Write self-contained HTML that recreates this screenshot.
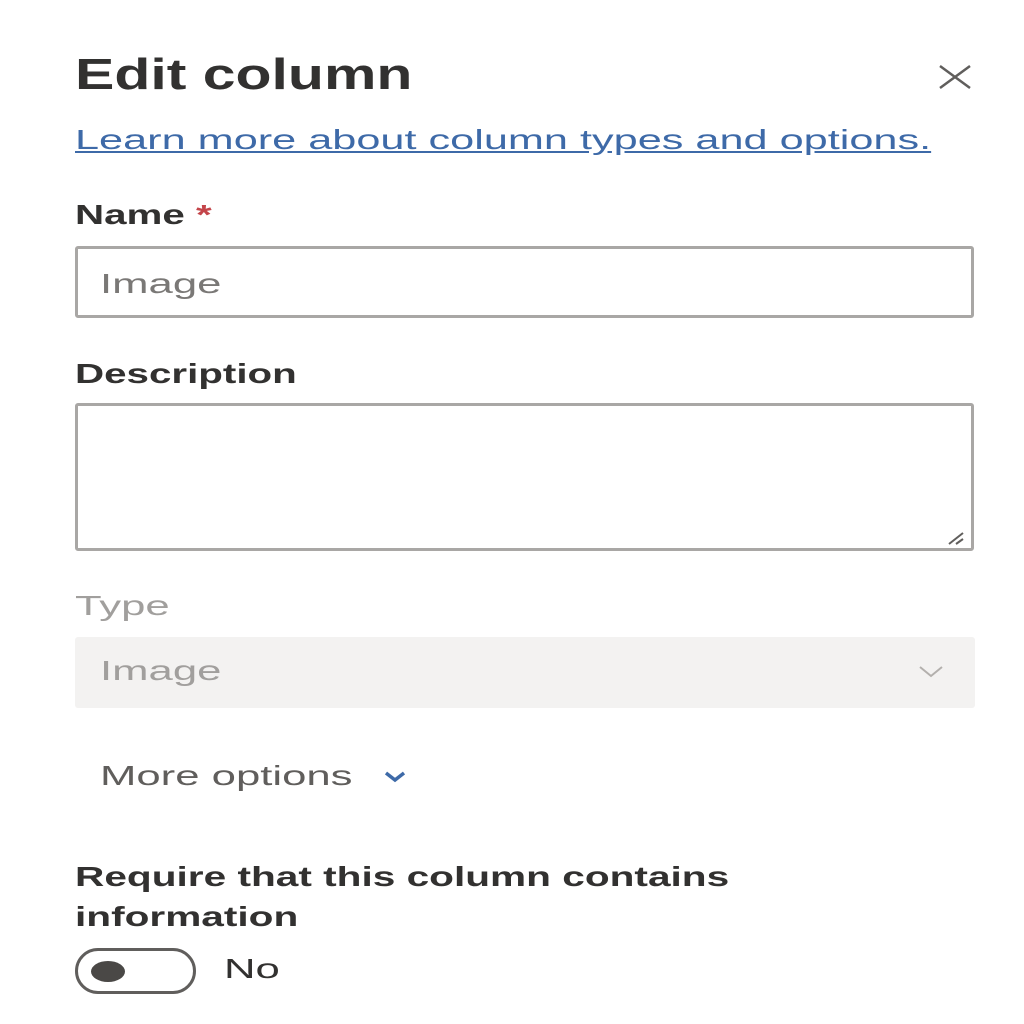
<!DOCTYPE html>
<html><head><style>
body{margin:0;width:1024px;height:1024px;background:#fff;position:relative;overflow:hidden;font-family:"Liberation Sans",sans-serif;}
.t{position:absolute;white-space:nowrap;transform-origin:0 0;transform:scaleX(1.56);}
.b{transform:scaleX(1.44);}
.box{position:absolute;box-sizing:border-box;}
</style></head><body>
<div class="t" style="left:75px;top:50px;font-size:44px;color:#323130;font-weight:bold;transform:scaleX(1.34);">Edit column</div>
<svg style="position:absolute;left:938px;top:64px" width="34" height="26"><path d="M2 2L32 24M32 2L2 24" stroke="#605e5c" stroke-width="2.5" fill="none"/></svg>
<div class="t" style="left:75px;top:124px;font-size:28px;color:#3e6aa8;text-decoration:underline;transform:scaleX(1.545);">Learn more about column types and options.</div>
<div class="t b" style="left:75px;top:199px;font-size:28px;color:#323130;font-weight:bold;">Name <span style="color:#c4454a">*</span></div>
<div class="box" style="left:75px;top:246px;width:899px;height:72px;border:3px solid #a9a7a5;border-radius:3px;"></div>
<div class="t" style="left:100px;top:268px;font-size:28px;color:#7a7876;">Image</div>
<div class="t b" style="left:75px;top:358px;font-size:28px;color:#323130;font-weight:bold;">Description</div>
<div class="box" style="left:75px;top:403px;width:899px;height:148px;border:3px solid #a9a7a5;border-radius:3px;"></div>
<svg style="position:absolute;left:946px;top:530px" width="20" height="16"><path d="M3 14L17 3M10 14L17 9" stroke="#605e5c" stroke-width="2" fill="none"/></svg>
<div class="t" style="left:75px;top:590px;font-size:28px;color:#a19f9d;">Type</div>
<div class="box" style="left:75px;top:637px;width:900px;height:71px;background:#f3f2f1;border-radius:3px;"></div>
<div class="t" style="left:100px;top:655px;font-size:28px;color:#a19f9d;">Image</div>
<svg style="position:absolute;left:918px;top:665px" width="26" height="14"><path d="M2 2L13 11L24 2" stroke="#b3b0ad" stroke-width="2" fill="none"/></svg>
<div class="t" style="left:100px;top:760px;font-size:28px;color:#605e5c;">More options</div>
<svg style="position:absolute;left:383px;top:770px" width="24" height="14"><path d="M3 3L12 10L21 3" stroke="#3e6aa8" stroke-width="3.5" fill="none"/></svg>
<div class="t b" style="left:75px;top:861px;font-size:28px;color:#323130;font-weight:bold;transform:scaleX(1.45);">Require that this column contains</div>
<div class="t b" style="left:75px;top:901px;font-size:28px;color:#323130;font-weight:bold;transform:scaleX(1.45);">information</div>
<div class="box" style="left:75px;top:948px;width:121px;height:46px;border:3px solid #605e5c;border-radius:23px;"></div>
<div class="box" style="left:91px;top:961px;width:34px;height:21px;background:#4a4846;border-radius:50%;"></div>
<div class="t" style="left:224px;top:953px;font-size:28px;color:#323130;">No</div>
</body></html>
